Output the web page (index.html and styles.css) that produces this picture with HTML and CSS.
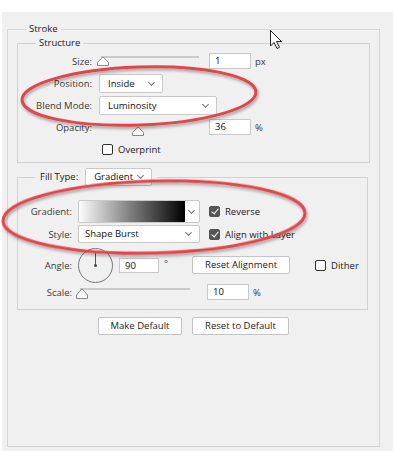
FILE: index.html
```html
<!DOCTYPE html>
<html lang="en">

<head>
	<meta charset="UTF-8" />
	<title>Stroke</title>
	<link rel="stylesheet" href="styles.css">
</head>

<body>
	<div class="panel">
		<fieldset class="group outer">
			<legend>Stroke</legend>

			<fieldset class="group structure">
				<legend>Structure</legend>
				<div class="row">
					<span class="lbl">Size:</span>
					<div class="slider">
						<div class="track"></div>
						<svg class="thumb" style="left: -2px; top: 6px;" width="12" height="10" viewBox="0 0 12 10"><path d="M0.5 9.5 V6.5 L6 0.8 L11.5 6.5 V9.5 Z" fill="#fff" stroke="#8a8a8a" stroke-linejoin="round"/></svg>
					</div>
					<div class="num">1</div>
					<span class="unit">px</span>
				</div>
				<div class="row">
					<span class="lbl">Position:</span>
					<div class="select pos">Inside</div>
				</div>
				<div class="row">
					<span class="lbl">Blend Mode:</span>
					<div class="select blend">Luminosity</div>
				</div>
				<div class="row">
					<span class="lbl">Opacity:</span>
					<div class="slider">
						<svg class="thumb" style="left: 33px; top: 10px;" width="12" height="10" viewBox="0 0 12 10"><path d="M0.5 9.5 V6.5 L6 0.8 L11.5 6.5 V9.5 Z" fill="#fff" stroke="#8a8a8a" stroke-linejoin="round"/></svg>
					</div>
					<div class="num">36</div>
					<span class="unit">%</span>
				</div>
				<div class="row">
					<span class="lbl"></span>
					<span class="check overprint"></span>
					<span class="check-text">Overprint</span>
				</div>
			</fieldset>

			<fieldset class="group fill">
				<legend><span>Fill Type:</span><div class="select ftype">Gradient</div></legend>
				<div class="row grad-row">
					<span class="lbl">Gradient:</span>
					<div class="gradient"><div class="ramp"></div><div class="drop"></div></div>
					<span class="check on"></span>
					<span class="check-text">Reverse</span>
				</div>
				<div class="row style-row">
					<span class="lbl">Style:</span>
					<div class="select style">Shape Burst</div>
					<span class="check on"></span>
					<span class="check-text">Align with Layer</span>
				</div>
				<div class="row angle-row">
					<span class="lbl">Angle:</span>
					<div class="dial"><div class="hand"></div><div class="pin"></div></div>
					<div class="num small">90</div>
					<span class="deg">°</span>
					<div class="btn align">Reset Alignment</div>
					<span class="check dither"></span>
					<span class="check-text">Dither</span>
				</div>
				<div class="row scale-row">
					<span class="lbl">Scale:</span>
					<div class="slider scale">
						<div class="track"></div>
						<svg class="thumb" style="left: -2px; top: 4px;" width="12" height="11" viewBox="0 0 12 11"><path d="M0.5 10.5 V7 L6 0.8 L11.5 7 V10.5 Z" fill="#fff" stroke="#8a8a8a" stroke-linejoin="round"/></svg>
					</div>
					<div class="num">10</div>
					<span class="unit">%</span>
				</div>
			</fieldset>

			<div class="buttons">
				<div class="btn">Make Default</div>
				<div class="btn">Reset to Default</div>
			</div>
		</fieldset>
	</div>

	<!-- annotation marks drawn over the dialog -->
	<svg class="marks" width="394" height="452" viewBox="0 0 394 452">
		<defs>
			<filter id="shade" x="-10%" y="-30%" width="120%" height="160%">
				<feDropShadow dx="1" dy="2" stdDeviation="1.5" flood-color="#000" flood-opacity="0.35"/>
			</filter>
		</defs>
		<g fill="none" stroke="#e0474c" stroke-width="3" filter="url(#shade)">
			<ellipse cx="139" cy="96" rx="117" ry="29" transform="rotate(-2 139 96)"/>
			<ellipse cx="154" cy="217" rx="151" ry="36" transform="rotate(-1.5 154 217)"/>
		</g>
		<path d="M270.5 30.5 V46 L274 42.5 L277 48.5 L279.5 47.3 L276.5 41.5 L281.5 41.5 Z" fill="#fff" stroke="#222" stroke-linejoin="round"/>
	</svg>
</body>

</html>
```

FILE: styles.css
```css
body, html {
	margin: 0;
	background-color: #fff;
	font-family: 'Open Sans', 'Liberation Sans', sans-serif;
	font-size: 9.5px;
	color: #3a3a3a;
}
.panel {
	display: flex;
	flex-direction: column;
	margin: 12px 1px 0 2px;
	height: 439px;
	background-color: #f0f0f0;
}
.group {
	margin: 0;
	padding: 0;
	min-width: 0;
	box-sizing: border-box;
	border: 1px solid #d2d2d2;
}
.group > legend {
	margin-left: 18px;
	padding: 0 3px;
	line-height: 14px;
	color: #222;
}
.outer {
	flex: 1;
	width: 373px;
	margin: 10px 0 4px 5px;
	border-color: #d6d6d6;
}
.structure {
	width: 353px;
	margin-left: 9px;
	padding: 0 0 2px;
}
.fill {
	width: 351px;
	margin: 5px 0 0 9px;
	padding: 13px 0 9px;
}
.fill > legend {
	display: flex;
	align-items: center;
	margin-left: 17px;
	padding: 0 5px;
	line-height: 18px;
}
.fill > legend span {
	margin-right: 7px;
}
.row {
	display: flex;
	align-items: center;
	height: 22px;
	white-space: nowrap;
}
.lbl {
	width: 74px;
	margin-right: 7px;
	text-align: right;
}
.fill .lbl {
	width: 54px;
	margin-right: 6px;
}
.slider {
	position: relative;
	width: 100px;
	height: 22px;
	margin-right: 10px;
}
.slider .track {
	position: absolute;
	top: 6px;
	left: 2px;
	right: 0;
	height: 2px;
	background-color: #cacaca;
}
.slider .thumb {
	position: absolute;
}
.slider.scale {
	width: 112px;
	height: 16px;
	margin-right: 17px;
}
.slider.scale .track {
	top: 4px;
}
.num {
	width: 42px;
	height: 16px;
	box-sizing: border-box;
	padding: 0 5px;
	line-height: 14px;
	background-color: #fff;
	border: 1px solid #c9c9c9;
	color: #111;
}
.num.small {
	width: 40px;
	height: 15px;
	line-height: 13px;
}
.unit {
	margin-left: 4px;
}
.select {
	position: relative;
	height: 19px;
	box-sizing: border-box;
	padding: 0 8px;
	line-height: 17px;
	background-color: #fff;
	border: 1px solid #c9c9c9;
	border-radius: 2px;
	color: #111;
}
.select::after {
	content: "";
	position: absolute;
	right: 8px;
	top: 5px;
	width: 4px;
	height: 4px;
	border-right: 1px solid #777;
	border-bottom: 1px solid #777;
	transform: rotate(45deg);
}
.select.pos {
	width: 64px;
}
.select.blend {
	width: 118px;
}
.select.ftype {
	width: 67px;
	height: 18px;
	line-height: 16px;
}
.select.style {
	width: 122px;
	height: 18px;
	line-height: 16px;
	padding-left: 6px;
}
.select.style::after,
.select.ftype::after {
	top: 4px;
}
.check {
	width: 11px;
	height: 11px;
	box-sizing: border-box;
	border: 1px solid #333;
	border-radius: 2px;
	background-color: #fff;
	margin-right: 5px;
}
.check.on {
	position: relative;
	margin-left: 9px;
	border-color: #555;
	background-color: #555;
}
.check.on::after {
	content: "";
	position: absolute;
	left: 3px;
	top: 0;
	width: 3px;
	height: 6px;
	border-right: 1.5px solid #fff;
	border-bottom: 1.5px solid #fff;
	transform: rotate(40deg);
}
.check.overprint {
	margin-left: 3px;
	margin-top: 1px;
}
.check-text {
	color: #222;
}
.grad-row {
	height: 24px;
}
.gradient {
	display: flex;
	width: 122px;
	height: 23px;
	box-sizing: border-box;
	border: 1px solid #c9c9c9;
	border-radius: 2px;
	background-color: #fff;
}
.gradient .ramp {
	flex: 1;
	background: linear-gradient(to right, #fdfdfd, #888 45%, #000);
}
.gradient .drop {
	position: relative;
	width: 14px;
}
.gradient .drop::after {
	content: "";
	position: absolute;
	left: 4px;
	top: 7px;
	width: 4px;
	height: 4px;
	border-right: 1px solid #777;
	border-bottom: 1px solid #777;
	transform: rotate(45deg);
}
.style-row {
	height: 20px;
	margin-top: 1px;
}
.angle-row {
	height: 38px;
	margin-top: 2px;
}
.dial {
	position: relative;
	width: 35px;
	height: 35px;
	box-sizing: border-box;
	border: 1px solid #777;
	border-radius: 50%;
	margin-right: 6px;
}
.dial .hand {
	position: absolute;
	left: 16px;
	top: 2px;
	width: 1px;
	height: 15px;
	background-color: #555;
}
.dial .pin {
	position: absolute;
	left: 15px;
	top: 15px;
	width: 3px;
	height: 3px;
	border-radius: 50%;
	background-color: #444;
}
.deg {
	margin: -3px 24px 0 5px;
}
.btn {
	height: 18px;
	box-sizing: border-box;
	padding: 0;
	line-height: 16px;
	text-align: center;
	white-space: nowrap;
	background-color: #fff;
	border: 1px solid #c4c4c4;
	border-radius: 2px;
	color: #222;
}
.btn.align {
	width: 98px;
	margin-right: 25px;
}
.scale-row {
	height: 16px;
}
.buttons {
	display: flex;
	justify-content: center;
	gap: 10px;
	margin-top: 7px;
}
.buttons .btn:first-child {
	width: 84px;
}
.buttons .btn:last-child {
	width: 97px;
}
.marks {
	position: absolute;
	top: 0;
	left: 0;
	pointer-events: none;
}
```
